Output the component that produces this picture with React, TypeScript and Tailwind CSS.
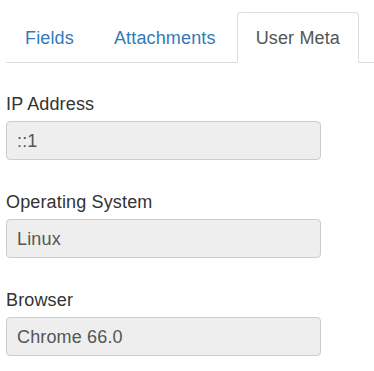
import React from "react";

const tabs = ["Fields", "Attachments", "User Meta"];
const active = "User Meta";

const fields = [
  { label: "IP Address", value: "::1" },
  { label: "Operating System", value: "Linux" },
  { label: "Browser", value: "Chrome 66.0" },
];

export default function App() {
  return (
    <div className="w-[374px] h-[371px] bg-white pt-3 pl-[6px] font-['Liberation_Sans',Arial,sans-serif] text-[18px] tracking-[0.15px]">
      {/* Tabs */}
      <ul className="flex border-b border-[#dddddd] h-[51px]">
        {tabs.map((t) => (
          <li key={t} className="mr-[2px] -mb-px">
            <a
              className={
                t === active
                  ? "block h-[51px] px-[18px] pt-[2px] leading-[47px] rounded-t-[4px] border border-[#dddddd] border-b-white bg-white text-[#555555]"
                  : "block h-[51px] px-[18px] pt-[2px] leading-[47px] rounded-t-[4px] border border-transparent text-[#337ab7]"
              }
            >
              {t}
            </a>
          </li>
        ))}
      </ul>

      {/* User meta fields */}
      <div className="pt-[26px] flex flex-col gap-[27px]">
        {fields.map((f) => (
          <div key={f.label} className="flex flex-col">
            <label className="text-[#333333] pt-[2px] leading-[26px] mb-[4px]">{f.label}</label>
            <div className="w-[315px] h-[39px] bg-[#eeeeee] border border-[#cccccc] rounded-[4px] px-[10px] pt-[2px] leading-[35px] text-[#555555]">
              {f.value}
            </div>
          </div>
        ))}
      </div>
    </div>
  );
}
